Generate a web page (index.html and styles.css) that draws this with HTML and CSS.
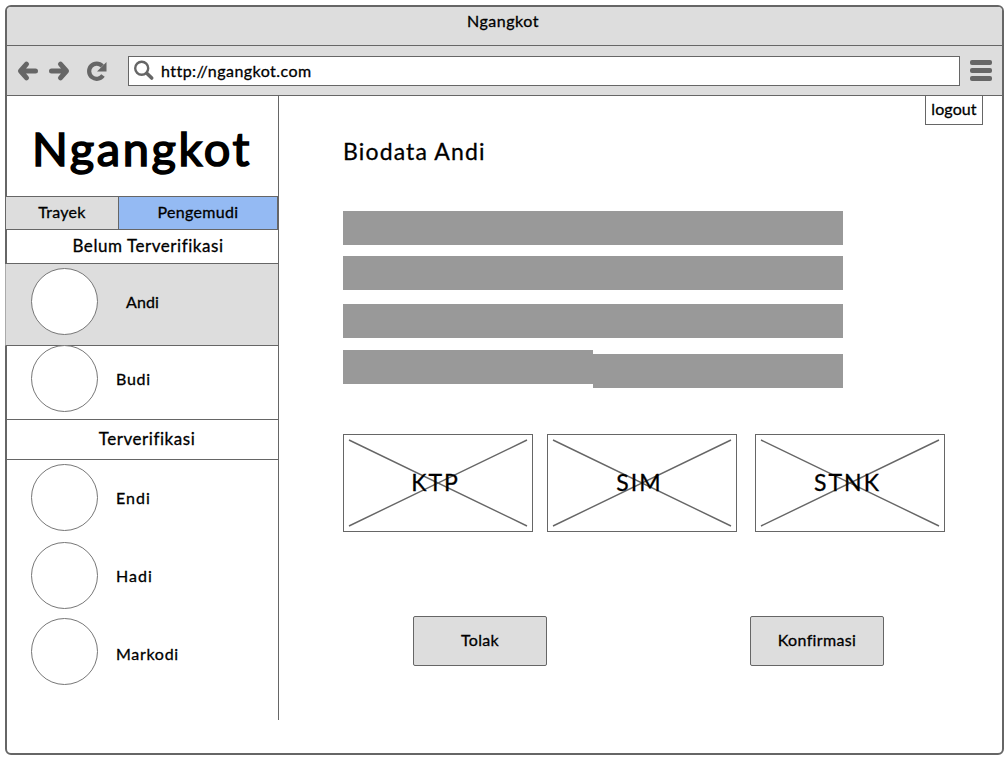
FILE: index.html
```
<!DOCTYPE html>
<html lang="id">
<head>
<meta charset="utf-8">
<title>Ngangkot</title>
<link rel="stylesheet" href="styles.css">
</head>
<body>
<div class="window">
  <header class="titlebar"><span class="t-title">Ngangkot</span></header>
  <div class="toolbar">
    <svg class="nav-icons" width="92" height="24" viewBox="0 0 92 24">
      <g fill="none" stroke="#666" stroke-width="5" stroke-linecap="round" stroke-linejoin="round">
        <path d="M18.500 12H5M9.500 5.200 3.500 12l6 6.800"/>
        <path d="M34.500 12H48M43.500 5.200l6 6.800-6 6.800"/>
        <path d="M86 16.500a7.600 7.600 0 1 1-.7-9.500" stroke-width="4.200" stroke-linecap="butt"/>
      </g>
      <path d="M89.500 3v9.500H80z" fill="#666"/>
    </svg>
    <div class="address">
      <svg width="22" height="22" viewBox="0 0 22 22" fill="none" stroke="#666">
        <circle cx="8.700" cy="8.200" r="6.500" stroke-width="2.400"/>
        <path d="M14 13.500l4.700 4.500" stroke-width="3.600" stroke-linecap="round"/>
      </svg>
      <span class="t-url">http://ngangkot.com</span>
    </div>
    <div class="menu"><i></i><i></i><i></i></div>
  </div>
  <div class="content">
    <aside class="sidebar">
      <h1 class="logo"><span>Ngangkot</span></h1>
      <nav class="tabs">
        <a class="tab">Trayek</a>
        <a class="tab tab-active">Pengemudi</a>
      </nav>
      <h2 class="group group-pending"><span>Belum Terverifikasi</span></h2>
      <div class="driver driver-selected"><i class="avatar"></i><span class="t-andi">Andi</span></div>
      <div class="driver driver-budi"><i class="avatar"></i><span class="t-budi">Budi</span></div>
      <h2 class="group group-verified"><span>Terverifikasi</span></h2>
      <div class="verified">
        <div class="driver"><i class="avatar"></i><span class="t-endi">Endi</span></div>
        <div class="driver driver-hadi"><i class="avatar"></i><span class="t-hadi">Hadi</span></div>
        <div class="driver driver-markodi"><i class="avatar"></i><span class="t-markodi">Markodi</span></div>
      </div>
    </aside>
    <main class="main">
      <a class="logout"><span>logout</span></a>
      <h2 class="heading"><span>Biodata Andi</span></h2>
      <div class="bars">
        <div class="bar"></div>
        <div class="bar bar-2"></div>
        <div class="bar bar-3"></div>
        <div class="bar-split"><div class="bar"></div><div class="bar bar-low"></div></div>
      </div>
      <div class="documents">
        <div class="doc">
          <svg viewBox="0 0 188 96"><path d="M5 5 183 91M183 5 5 91"/></svg>
          <span class="t-ktp">KTP</span>
        </div>
        <div class="doc doc-sim">
          <svg viewBox="0 0 188 96"><path d="M5 5 183 91M183 5 5 91"/></svg>
          <span class="t-sim">SIM</span>
        </div>
        <div class="doc doc-stnk">
          <svg viewBox="0 0 188 96"><path d="M5 5 183 91M183 5 5 91"/></svg>
          <span class="t-stnk">STNK</span>
        </div>
      </div>
      <div class="actions">
        <button class="button"><span class="t-tolak">Tolak</span></button>
        <button class="button"><span class="t-konf">Konfirmasi</span></button>
      </div>
    </main>
  </div>
</div>
</body>
</html>
```
FILE: styles.css
```
* { box-sizing: border-box; }
body {
  margin: 0;
  padding: 5px 0 0 5px;
  height: 757px;
  overflow: hidden;
  background: #fff;
  color: #000;
  font: 16px/20px Lato, "Open Sans", sans-serif;
  font-variant-ligatures: none;
  -webkit-text-stroke: 0.3px #000;
}
h1, h2 { margin: 0; font-weight: 400; }
span { white-space: nowrap; }
.window {
  width: 999px;
  height: 750px;
  border: 2px solid #666;
  border-radius: 6px;
  background: #fff;
}
.titlebar {
  height: 39px;
  padding: 4px 3px 0 0;
  border-bottom: 1px solid #666;
  border-radius: 4px 4px 0 0;
  background: #ddd;
  text-align: center;
  letter-spacing: 0.5px;
}
.toolbar {
  display: flex;
  align-items: center;
  height: 50px;
  padding-left: 10px;
  border-bottom: 1px solid #666;
  background: #ddd;
}
.nav-icons { flex: none; }
.address {
  display: flex;
  align-items: center;
  width: 832px;
  height: 30px;
  margin-left: 19px;
  padding-left: 4px;
  border: 1px solid #666;
  background: #fff;
}
.address span { margin-left: 6px; letter-spacing: 0.45px; }
.menu { display: flex; flex-direction: column; gap: 3px; margin-left: 10px; }
.menu i { width: 22px; height: 5px; border-radius: 2px; background: #666; }
.content { display: flex; height: 657px; }
.sidebar { width: 272px; height: 624px; border-right: 1px solid #666; }
.logo { height: 100px; padding: 22px 0 0 25px; font-size: 47px; line-height: 60px; letter-spacing: 2.6px; -webkit-text-stroke: 1.6px #000; }
.tabs { display: flex; width: 273px; height: 34px; margin-left: -2px; border: 1px solid #666; background: #ddd; line-height: 30px; text-align: center; letter-spacing: 0.3px; }
.tab { width: 112px; }
.tab-active { width: 159px; border-left: 1px solid #666; background: #94baf3; }
.group { font-size: 17px; text-align: center; letter-spacing: 0.55px; border-bottom: 1px solid #666; }
.group-pending { height: 34px; padding-left: 11px; line-height: 32px; }
.group-verified { height: 40px; padding-left: 9px; line-height: 38px; }
.driver { display: flex; align-items: center; gap: 18px; height: 67px; padding-left: 24px; letter-spacing: 0.7px; }
.avatar { width: 67px; height: 67px; border: 1px solid #777; border-radius: 50%; background: #fff; }
.driver-selected { width: 273px; height: 82px; margin-left: -2px; padding: 0 0 6px 26px; gap: 28px; border-bottom: 1px solid #666; border-left: 1px solid #aaa; padding-left: 25px; background: #ddd; letter-spacing: 0.1px; }
.driver-budi { height: 74px; padding-bottom: 8px; border-bottom: 1px solid #666; }
.verified { padding-top: 4px; }
.driver-hadi { margin-top: 11px; }
.driver-markodi { margin-top: 9px; }
.t-endi, .t-hadi { letter-spacing: 1px; }
.t-markodi { padding-top: 4px; }
.main { flex: 1; display: flex; flex-direction: column; padding-left: 64px; }
.logout { align-self: flex-end; width: 58px; height: 29px; margin-right: 19px; border: 1px solid #666; border-top: 0; line-height: 26px; text-align: center; letter-spacing: 0.1px; }
.heading { height: 86px; padding-top: 11px; font-size: 23px; line-height: 30px; letter-spacing: 1.15px; }
.bars { width: 500px; height: 223px; }
.bar { height: 34px; background: #999; }
.bar-2 { margin-top: 11px; }
.bar-3 { margin-top: 14px; }
.bar-split { display: grid; grid-template-columns: 1fr 1fr; margin-top: 12px; }
.bar-low { margin-top: 4px; }
.documents { display: flex; height: 182px; }
.doc { display: grid; width: 190px; height: 98px; border: 1px solid #666; place-items: center; font-size: 23px; letter-spacing: 2px; }
.doc > * { grid-area: 1 / 1; }
.doc span { padding: 0 5px 2px 0; }
.doc svg { width: 188px; height: 96px; fill: none; stroke: #666; stroke-width: 1.4; }
.doc-sim { margin-left: 14px; }
.doc-stnk { margin-left: 18px; }
.actions { display: flex; gap: 203px; padding-left: 70px; }
.button { width: 134px; height: 50px; padding: 0 0 2px; border: 1px solid #666; border-radius: 2px; background: #ddd; color: #000; font: inherit; letter-spacing: 0.35px; -webkit-text-stroke: inherit; }
```
